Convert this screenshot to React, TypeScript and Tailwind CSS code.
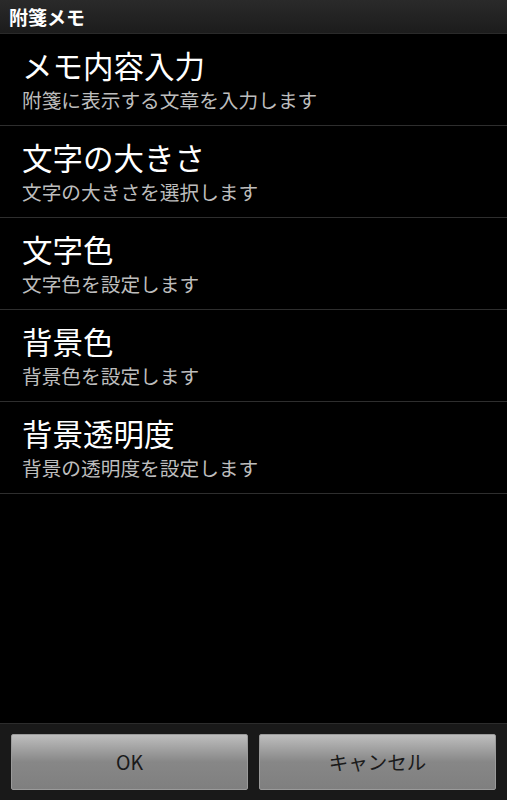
const items = [
  { title: 'メモ内容入力', sub: '附箋に表示する文章を入力します' },
  { title: '文字の大きさ', sub: '文字の大きさを選択します' },
  { title: '文字色', sub: '文字色を設定します' },
  { title: '背景色', sub: '背景色を設定します' },
  { title: '背景透明度', sub: '背景の透明度を設定します' },
]

export default function App() {
  return (
    <div
      className="flex h-[800px] w-[507px] flex-col bg-black"
      style={{ fontFamily: '"Noto Sans CJK JP", "Noto Sans", sans-serif' }}
    >
      <div className="flex h-[34px] items-center border-b border-[#2a2a2a] bg-gradient-to-b from-[#2a2a2a] to-[#1c1c1c] pl-[9px]">
        <span className="text-[19px] font-bold leading-none text-white">附箋メモ</span>
      </div>

      <div className="flex-1">
        {items.map((item) => (
          <div
            key={item.title}
            className="flex h-[92px] flex-col justify-center border-b border-[#2e2e2e] pl-[22px]"
          >
            <div className="text-[30.5px] leading-[36px] text-white">{item.title}</div>
            <div className="mt-[5px] text-[19.7px] leading-[24px] text-[#bdbdbd]">{item.sub}</div>
          </div>
        ))}
      </div>

      <div className="grid h-[77px] grid-cols-2 gap-[11px] border-t border-[#2c2c2c] bg-[#191919] px-[11px] pt-[10px] pb-[10px]">
        <button className="rounded-[2px] border border-[#9a9a9a] bg-gradient-to-b from-[#bebebe] via-[#878787] to-[#7f7f7f] text-[19.5px] text-[#1a1a1a]">
          OK
        </button>
        <button className="rounded-[2px] border border-[#9a9a9a] bg-gradient-to-b from-[#bebebe] via-[#878787] to-[#7f7f7f] text-[19.5px] text-[#1a1a1a]">
          キャンセル
        </button>
      </div>
    </div>
  )
}
